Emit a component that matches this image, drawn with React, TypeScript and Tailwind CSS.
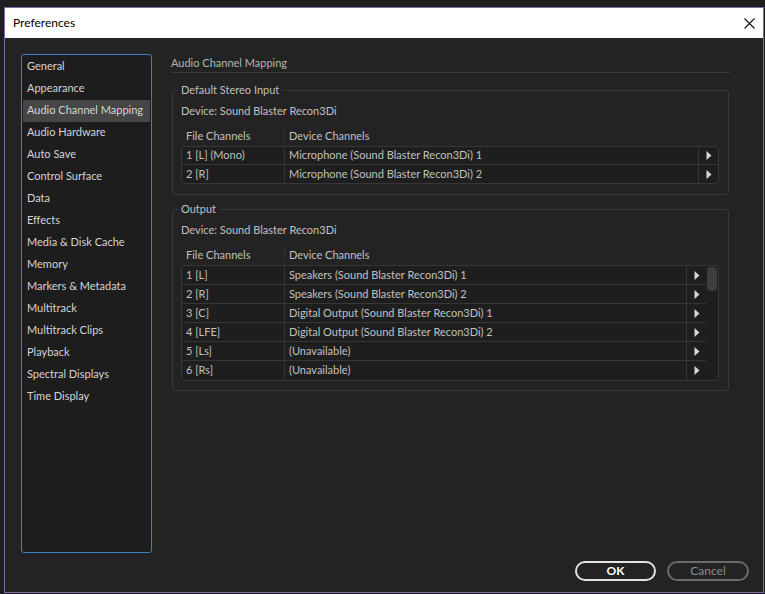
import React from 'react';

const sections = [
  'General',
  'Appearance',
  'Audio Channel Mapping',
  'Audio Hardware',
  'Auto Save',
  'Control Surface',
  'Data',
  'Effects',
  'Media & Disk Cache',
  'Memory',
  'Markers & Metadata',
  'Multitrack',
  'Multitrack Clips',
  'Playback',
  'Spectral Displays',
  'Time Display',
];

const inputRows: [string, string][] = [
  ['1 [L] (Mono)', 'Microphone (Sound Blaster Recon3Di) 1'],
  ['2 [R]', 'Microphone (Sound Blaster Recon3Di) 2'],
];

const outputRows: [string, string][] = [
  ['1 [L]', 'Speakers (Sound Blaster Recon3Di) 1'],
  ['2 [R]', 'Speakers (Sound Blaster Recon3Di) 2'],
  ['3 [C]', 'Digital Output (Sound Blaster Recon3Di) 1'],
  ['4 [LFE]', 'Digital Output (Sound Blaster Recon3Di) 2'],
  ['5 [Ls]', '(Unavailable)'],
  ['6 [Rs]', '(Unavailable)'],
];

const Arrow = () => (
  <svg width="6" height="9" viewBox="0 0 6 9">
    <path d="M0.5 0 L5.5 4.5 L0.5 9 Z" fill="#d6d6d6" />
  </svg>
);

const ChannelTable: React.FC<{ rows: [string, string][]; rowH: string; scroll?: boolean }> = ({ rows, rowH, scroll }) => (
  <div className="flex w-[538px] rounded-[3px] border border-[#373737] bg-[#1e1e1e]">
    <div className="flex-1">
      {rows.map(([file, device], i) => (
        <div
          key={file}
          className={`flex ${rowH} ${i < rows.length - 1 ? 'border-b border-[#363636]' : ''}`}
        >
          <div className="flex w-[103px] items-center border-r border-[#363636] pl-[4px]">{file}</div>
          <div className="flex flex-1 items-center pl-[4px]">{device}</div>
          <div className="flex w-[20px] items-center justify-center border-l border-[#363636]">
            <Arrow />
          </div>
        </div>
      ))}
    </div>
    {scroll && (
      <div className="w-[12px] pl-[1px] pt-[1px]">
        <div className="h-[24px] w-[10px] rounded-[4px] bg-[#3e3e3e]" />
      </div>
    )}
  </div>
);

const Group: React.FC<{ title: string; rows: [string, string][]; rowH: string; scroll?: boolean; className?: string }> = ({
  title,
  rows,
  rowH,
  scroll,
  className,
}) => (
  <fieldset className={`mx-[1px] rounded-[3px] border border-[#3a3a3a] pl-[8px] pr-[9px] ${className ?? ''}`}>
    <legend className="-ml-[3px] px-[3px] leading-[16px]">{title}</legend>
    <div className="mt-[5px] flex h-[16px] items-center">Device: Sound Blaster Recon3Di</div>
    <div className="mt-[7px] flex h-[20px] items-center">
      <div className="flex w-[104px] items-center pl-[5px]">
        <span className="flex-1">File Channels</span>
        <span className="h-[12px] w-px bg-[#353535]" />
      </div>
      <span className="pl-[4px]">Device Channels</span>
    </div>
    <ChannelTable rows={rows} rowH={rowH} scroll={scroll} />
  </fieldset>
);

export default function App() {
  return (
    <div
      className="h-[594px] w-[765px] bg-[#1f1f1f] pt-[7px] pl-[4px] text-[11px] text-[#c0c0c0]"
      style={{ fontFamily: 'Lato, "Noto Sans", sans-serif' }}
    >
      <div className="flex h-[586px] w-[760px] flex-col border border-[#7d6aa5]">
        <div className="flex h-[30px] items-center justify-between bg-white pl-[8px] pr-[8px] text-[12px] text-black">
          <span>Preferences</span>
          <svg width="11" height="11" viewBox="0 0 11 11">
            <path d="M0.5 0.5 L10.5 10.5 M10.5 0.5 L0.5 10.5" stroke="#111" strokeWidth="1.1" />
          </svg>
        </div>
        <div className="flex flex-1 flex-col bg-[#232323] pl-[16px] pr-[14px] pt-[16px]">
          <div className="flex h-[499px] gap-[19px]">
            <div className="w-[131px] whitespace-nowrap rounded-[3px] border border-[#3f7dc8] bg-[#1d1d1d] p-[1px] text-[#d4d4d4]">
              {sections.map((s) => (
                <div
                  key={s}
                  className={`flex h-[22px] items-center px-[4px] pb-[1px] ${s === 'Audio Channel Mapping' ? 'bg-[#464646]' : ''}`}
                >
                  {s}
                </div>
              ))}
            </div>
            <div className="w-[559px]">
              <div className="flex h-[19px] items-center border-b border-[#3a3a3a] text-[#b4b4b4]">Audio Channel Mapping</div>
              <Group title="Default Stereo Input" rows={inputRows} rowH="h-[18px]" className="mt-[9px] pb-[10px]" />
              <Group title="Output" rows={outputRows} rowH="h-[19px]" scroll className="mt-[6px] pb-[9px]" />
            </div>
          </div>
          <div className="mt-[8px] flex justify-end gap-[11px]">
            <button className="flex h-[20px] w-[81px] items-center justify-center rounded-full border-2 border-[#e2e2e2] text-[12px] font-bold text-white">
              OK
            </button>
            <button className="flex h-[20px] w-[82px] items-center justify-center rounded-full border-2 border-[#6a6a6a] text-[12px] text-[#8c8c8c]">
              Cancel
            </button>
          </div>
        </div>
      </div>
    </div>
  );
}
